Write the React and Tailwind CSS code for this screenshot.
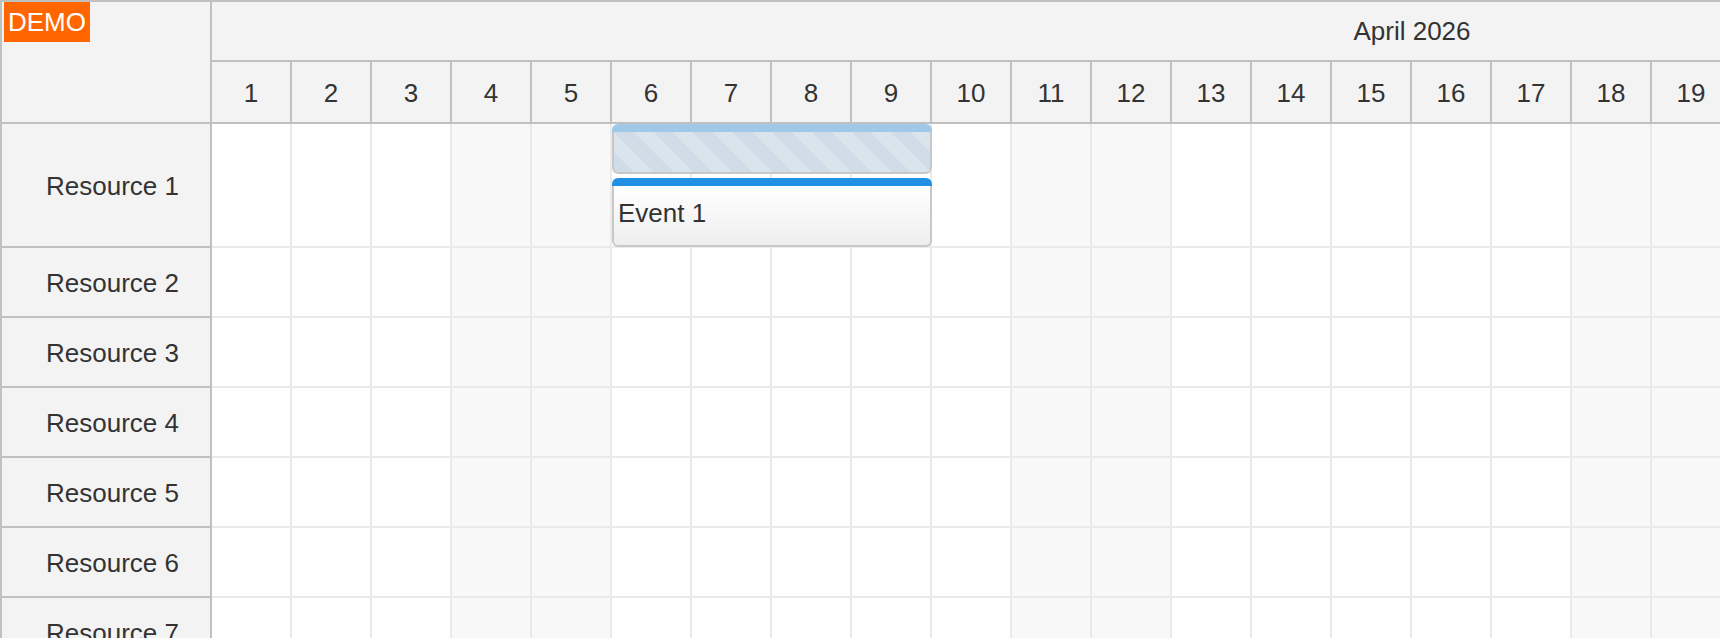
const days = Array.from({ length: 30 }, (_, i) => i + 1)
// April 2026 starts on a Wednesday
const isWeekend = (d) => {
  const dow = (d + 2) % 7 // 0 = Sunday, 6 = Saturday
  return dow === 6 || dow === 0
}
const resources = ['Resource 1', 'Resource 2', 'Resource 3', 'Resource 4', 'Resource 5', 'Resource 6', 'Resource 7', 'Resource 8']

function Cells() {
  return days.map((d) => (
    <div
      key={d}
      className={`w-[80px] shrink-0 h-full border-r-2 border-[#eaeaea] ${isWeekend(d) ? 'bg-[#f8f8f8]' : 'bg-white'}`}
    />
  ))
}

export default function App() {
  return (
    <div className="w-[1720px] h-[638px] overflow-hidden bg-white font-['Liberation_Sans',Arial,sans-serif] text-[26px] text-[#333333]">
      <div className="flex h-full border-l-2 border-t-2 border-[#c0c0c0]">
        {/* Row headers */}
        <div className="relative w-[210px] shrink-0 border-r-2 border-[#c0c0c0] bg-[#f3f3f3]">
          <div className="h-[122px] border-b-2 border-[#c0c0c0]" />
          <div className="absolute left-[2px] top-0 h-[40px] px-[4px] flex items-center bg-[#ff6600] text-white leading-none">
            DEMO
          </div>
          {resources.map((r, i) => (
            <div
              key={r}
              className={`flex items-center pl-[44px] pt-[3px] border-b-2 border-[#c0c0c0] ${i === 0 ? 'h-[124px]' : 'h-[70px]'}`}
            >
              {r}
            </div>
          ))}
        </div>

        {/* Timeline */}
        <div className="flex-1 overflow-hidden">
          <div className="w-[2400px]">
            <div className="h-[60px] flex items-center justify-center bg-[#f3f3f3] border-b-2 border-[#c0c0c0]">
              April 2026
            </div>
            <div className="h-[62px] flex bg-[#f3f3f3] border-b-2 border-[#c0c0c0]">
              {days.map((d) => (
                <div key={d} className="w-[80px] shrink-0 flex items-center justify-center pt-[2px] border-r-2 border-[#c0c0c0]">
                  {d}
                </div>
              ))}
            </div>

            {resources.map((r, i) => (
              <div
                key={r}
                className={`relative flex border-b-2 border-[#eaeaea] ${i === 0 ? 'h-[124px]' : 'h-[70px]'}`}
              >
                <Cells />
                {i === 0 && (
                  <>
                    <div className="absolute left-[400px] top-0 w-[320px] h-[50px] flex flex-col rounded-[6px] overflow-hidden">
                      <div className="h-[8px] shrink-0 bg-[#9fc8e9]" />
                      <div className="flex-1 border-2 border-t-0 border-[#c8c8c8] rounded-b-[6px] bg-[repeating-linear-gradient(45deg,#d0dde8_0px,#d0dde8_14px,#dae4ed_14px,#dae4ed_28px)]" />
                    </div>
                    <div className="absolute left-[400px] top-[54px] w-[320px] h-[69px] flex flex-col rounded-[6px] overflow-hidden">
                      <div className="h-[8px] shrink-0 bg-[#2191e3]" />
                      <div className="relative flex-1 border-2 border-t-0 border-[#c8c8c8] rounded-b-[6px] bg-linear-to-b from-white to-[#eeeeee]">
                        <div className="absolute left-[4px] top-[-4px] bottom-0 flex items-center">Event 1</div>
                      </div>
                    </div>
                  </>
                )}
              </div>
            ))}
          </div>
        </div>
      </div>
    </div>
  )
}
